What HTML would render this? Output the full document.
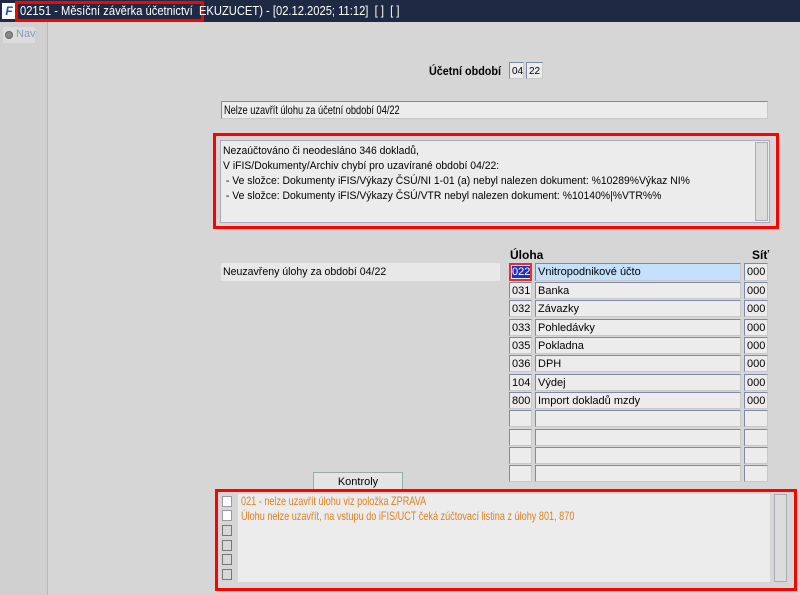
<!DOCTYPE html>
<html><head><meta charset="utf-8"><style>
*{margin:0;padding:0;box-sizing:border-box}
body{width:800px;height:595px;background:#d6d6d6;font-family:"Liberation Sans",Arial,sans-serif;font-size:11px;color:#000;position:relative;overflow:hidden}
.a{position:absolute}
.f{position:absolute;background:#ececec;border:1px solid #7d8aa6;border-right-color:#c8c8c8;border-bottom-color:#c8c8c8;padding-left:2px;line-height:17px;white-space:nowrap;overflow:hidden}
.red{position:absolute;border:3px solid #f00}
.sb{position:absolute;width:13px;background:#dcdcdc;border:1px solid #aab}
.sx{transform-origin:left top;white-space:nowrap}
</style></head><body>
<div class="a" style="left:0;top:0;width:800px;height:22px;background:#1e2a44"></div>
<div class="a" style="left:2px;top:3px;width:14px;height:16px;background:#fff;color:#1a4fc0;font-weight:bold;font-size:12px;line-height:16px;text-align:center;font-style:italic">F</div>
<div class="a" style="left:15px;top:1px;width:189px;height:21px;border:3px solid #f00"></div>
<div class="a sx" style="left:20px;top:3px;color:#fff;font-size:13px;line-height:16px;transform:scaleX(0.86)">02151 - Měsíční závěrka účetnictví &nbsp;EKUZUCET) - [02.12.2025; 11:12] &nbsp;[ ] &nbsp;[ ]</div>
<div class="a" style="left:0;top:22px;width:48px;height:573px;background:#d0d0d0;border-right:1px solid #b8b8b8"></div>
<div class="a" style="left:3px;top:27px;width:32px;height:16px;background:#dcdcdc"></div>
<div class="a" style="left:5px;top:31px;width:8px;height:8px;border-radius:50%;background:#888;border:1px solid #666"></div>
<div class="a" style="left:16px;top:28px;color:#8a9bb8;font-size:11px">Nav</div>

<div class="a sx" style="left:429px;top:64px;font-weight:bold;font-size:12px;transform:scaleX(0.9)">Účetní období</div>
<div class="f" style="left:509px;top:62px;width:15px;height:17px;font-size:10px">04</div>
<div class="f" style="left:526px;top:62px;width:17px;height:17px;font-size:10px">22</div>

<div class="f" style="left:221px;top:101px;width:547px;height:18px"><div class="sx" style="font-size:12px;transform:scaleX(0.77)">Nelze uzavřít úlohu za účetní období 04/22</div></div>

<div class="red" style="left:213px;top:133px;width:566px;height:96px"></div>
<div class="a" style="left:220px;top:140px;width:550px;height:83px;background:#ececec;border:1px solid #aab"></div>
<div class="a sx" style="left:223px;top:144px;line-height:15px;transform:scaleX(0.945)">Nezaúčtováno či neodesláno 346 dokladů,<br>V iFIS/Dokumenty/Archiv chybí pro uzavírané období 04/22:<br>&nbsp;- Ve složce: Dokumenty iFIS/Výkazy ČSÚ/NI 1-01 (a) nebyl nalezen dokument: %10289%Výkaz NI%<br>&nbsp;- Ve složce: Dokumenty iFIS/Výkazy ČSÚ/VTR nebyl nalezen dokument: %10140%|%VTR%%</div>
<div class="sb" style="left:755px;top:142px;height:79px"></div>

<div class="a" style="left:510px;top:248px;font-weight:bold;font-size:12px">Úloha</div>
<div class="a" style="left:752px;top:248px;font-weight:bold;font-size:12px">Síť</div>
<div class="a" style="left:221px;top:263px;width:279px;height:18px;background:#e8e8e8;padding-left:2px;line-height:18px"><div class="sx" style="transform:scaleX(0.96)">Neuzavřeny úlohy za období 04/22</div></div>

<div class="f" style="left:509px;top:263px;width:23px;height:18px;border:2px solid #e03030;line-height:15px;padding-left:1px"><span style="background:#2030c0;color:#fff">022</span></div>
<div class="f" style="left:535px;top:263px;width:206px;height:18px;background:#c4e0fa">Vnitropodnikové účto</div>
<div class="f" style="left:744px;top:263px;width:24px;height:18px">000</div>

<div class="f" style="left:509px;top:282px;width:23px;height:17px">031</div><div class="f" style="left:535px;top:282px;width:206px;height:17px">Banka</div><div class="f" style="left:744px;top:282px;width:24px;height:17px">000</div>
<div class="f" style="left:509px;top:300px;width:23px;height:17px">032</div><div class="f" style="left:535px;top:300px;width:206px;height:17px">Závazky</div><div class="f" style="left:744px;top:300px;width:24px;height:17px">000</div>
<div class="f" style="left:509px;top:319px;width:23px;height:17px">033</div><div class="f" style="left:535px;top:319px;width:206px;height:17px">Pohledávky</div><div class="f" style="left:744px;top:319px;width:24px;height:17px">000</div>
<div class="f" style="left:509px;top:337px;width:23px;height:17px">035</div><div class="f" style="left:535px;top:337px;width:206px;height:17px">Pokladna</div><div class="f" style="left:744px;top:337px;width:24px;height:17px">000</div>
<div class="f" style="left:509px;top:355px;width:23px;height:17px">036</div><div class="f" style="left:535px;top:355px;width:206px;height:17px">DPH</div><div class="f" style="left:744px;top:355px;width:24px;height:17px">000</div>
<div class="f" style="left:509px;top:374px;width:23px;height:17px">104</div><div class="f" style="left:535px;top:374px;width:206px;height:17px">Výdej</div><div class="f" style="left:744px;top:374px;width:24px;height:17px">000</div>
<div class="f" style="left:509px;top:392px;width:23px;height:17px">800</div><div class="f" style="left:535px;top:392px;width:206px;height:17px">Import dokladů mzdy</div><div class="f" style="left:744px;top:392px;width:24px;height:17px">000</div>
<div class="f" style="left:509px;top:410px;width:23px;height:17px"></div><div class="f" style="left:535px;top:410px;width:206px;height:17px"></div><div class="f" style="left:744px;top:410px;width:24px;height:17px"></div>
<div class="f" style="left:509px;top:429px;width:23px;height:17px"></div><div class="f" style="left:535px;top:429px;width:206px;height:17px"></div><div class="f" style="left:744px;top:429px;width:24px;height:17px"></div>
<div class="f" style="left:509px;top:447px;width:23px;height:17px"></div><div class="f" style="left:535px;top:447px;width:206px;height:17px"></div><div class="f" style="left:744px;top:447px;width:24px;height:17px"></div>
<div class="f" style="left:509px;top:465px;width:23px;height:17px"></div><div class="f" style="left:535px;top:465px;width:206px;height:17px"></div><div class="f" style="left:744px;top:465px;width:24px;height:17px"></div>

<div class="a" style="left:313px;top:472px;width:90px;height:19px;background:#e4e4e4;border:1px solid #9aa;border-bottom:none;text-align:center;line-height:18px;font-size:11px">Kontroly</div>

<div class="red" style="left:215px;top:489px;width:582px;height:102px"></div>
<div class="a" style="left:238px;top:494px;width:532px;height:88px;background:#ececec"></div>
<div class="a" style="left:222px;top:496px;width:10px;height:11px;background:#fff;border:1px solid #99a"></div>
<div class="a" style="left:222px;top:510px;width:10px;height:11px;background:#fff;border:1px solid #99a"></div>
<div class="a" style="left:222px;top:525px;width:10px;height:11px;background:#d8d8d8;border:1px solid #777"></div>
<div class="a" style="left:222px;top:540px;width:10px;height:11px;background:#d8d8d8;border:1px solid #777"></div>
<div class="a" style="left:222px;top:554px;width:10px;height:11px;background:#d8d8d8;border:1px solid #777"></div>
<div class="a" style="left:222px;top:569px;width:10px;height:11px;background:#d8d8d8;border:1px solid #777"></div>
<div class="a sx" style="left:241px;top:494px;color:#e08020;line-height:15px;font-size:12px;transform:scaleX(0.76)">021 - nelze uzavřít úlohu viz položka ZPRAVA<br>Úlohu nelze uzavřít, na vstupu do iFIS/UCT čeká zúčtovací listina z úlohy 801, 870</div>
<div class="sb" style="left:774px;top:494px;height:88px"></div>
</body></html>
